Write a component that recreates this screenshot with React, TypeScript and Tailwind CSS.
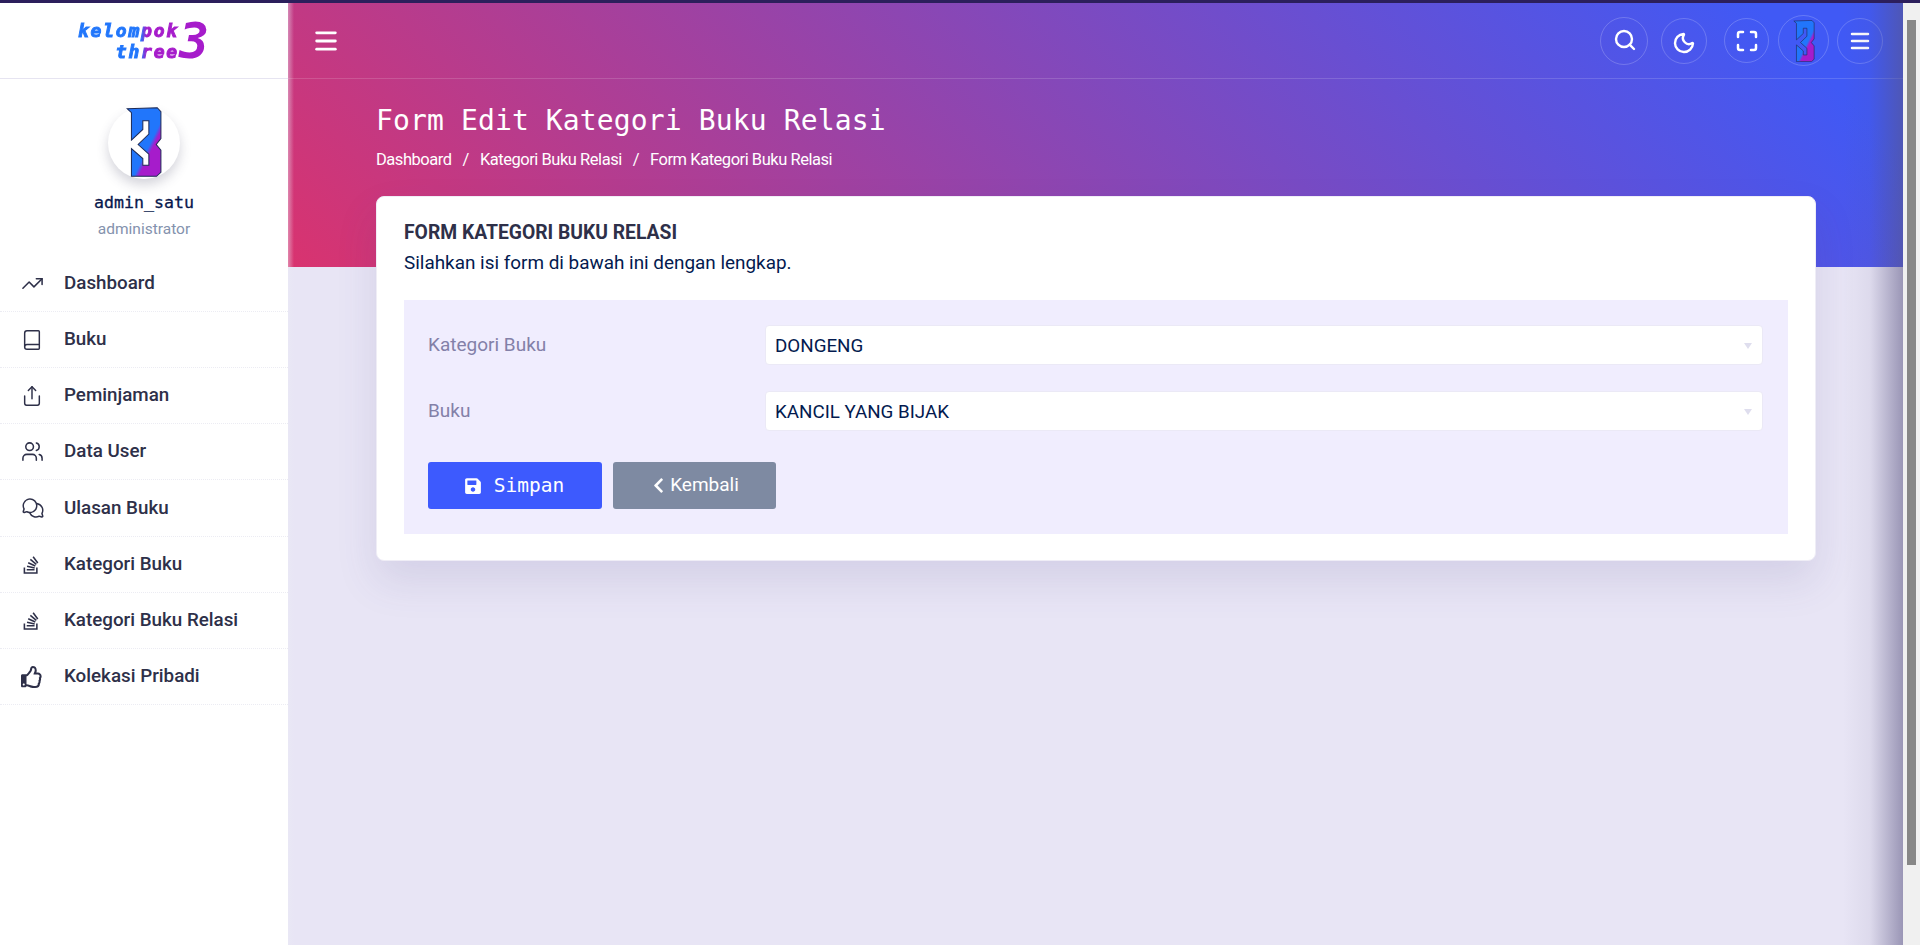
import { Book, Maximize, Menu, Moon, Search, Share, TrendingUp, Users } from "lucide-react";
import { FaChevronLeft, FaRegThumbsUp, FaSave, FaStackOverflow } from "react-icons/fa";
import { PiChatsCircle } from "react-icons/pi";
import type { ReactNode } from "react";

const roboto = "font-['Roboto',sans-serif]";
const mono = "font-['DejaVu_Sans_Mono',monospace]";

function Mark({ className, id }: { className: string; id: string }) {
  return (
    <svg viewBox="98 31 105 209" className={className}>
      <defs>
        <linearGradient id={id} x1="0" y1="0" x2="1" y2="1">
          <stop offset="0.6" stopColor="#2176fb" />
          <stop offset="0.67" stopColor="#a61ccb" />
        </linearGradient>
      </defs>
      <polygon
        points="100,36 190,33 201,45 201,125 187,143 201,160 201,226 188,238 113,238 113,155 147,185 147,205 165,205 165,172 133,143 165,112 165,72 147,72 147,98 113,130 113,48"
        fill={`url(#${id})`}
        stroke="#1d2a55"
        strokeWidth="3"
      />
    </svg>
  );
}

const nav: { label: string; icon: ReactNode; h: string }[] = [
  { label: "Dashboard", icon: <TrendingUp size={23} strokeWidth={1.6} />, h: "h-[56px]" },
  { label: "Buku", icon: <Book size={22} strokeWidth={1.6} />, h: "h-[56px]" },
  { label: "Peminjaman", icon: <Share size={22} strokeWidth={1.6} />, h: "h-[56px]" },
  { label: "Data User", icon: <Users size={23} strokeWidth={1.6} />, h: "h-[56px]" },
  { label: "Ulasan Buku", icon: <PiChatsCircle size={24} />, h: "h-[57px]" },
  { label: "Kategori Buku", icon: <FaStackOverflow size={20} />, h: "h-[56px]" },
  { label: "Kategori Buku Relasi", icon: <FaStackOverflow size={20} />, h: "h-[56px]" },
  { label: "Kolekasi Pribadi", icon: <FaRegThumbsUp size={22} />, h: "h-[56px]" },
];

function Circle({ size, children }: { size: string; children: ReactNode }) {
  return (
    <div className={`${size} flex shrink-0 items-center justify-center rounded-full border border-white/20 text-white`}>
      {children}
    </div>
  );
}

function Field({ label, value }: { label: string; value: string }) {
  return (
    <div className="flex h-10 items-center">
      <div className="w-[361px] pl-[24px] pt-[1px] text-[19px] text-[#8380a8]">{label}</div>
      <div className="flex h-10 flex-1 items-center justify-between rounded-[4px] border border-[#ebe9f6] bg-white pl-[9px] pr-[10px] pt-[2px] text-[18.8px] text-[#031a4f]">
        <span>{value}</span>
        <span className="h-0 w-0 border-x-[4px] border-t-[6px] border-x-transparent border-t-[#dfdeee]" />
      </div>
    </div>
  );
}

export default function App() {
  return (
    <div className={`${roboto} flex h-[945px] flex-col overflow-hidden bg-[#f0f0f0]`}>
      <div className="h-[3px] shrink-0 bg-[#2c1f5c]" />
      <div className="flex min-h-0 flex-1">
        <aside className="flex w-[288px] shrink-0 flex-col bg-white">
          <div className="flex h-[76px] shrink-0 items-center justify-center border-b border-[#e6e4f1] pr-[1px]">
            <div className="flex items-center font-bold italic [font-family:'DejaVu_Sans_Mono',monospace]">
              <div className="flex flex-col items-end bg-[linear-gradient(90deg,#2176fb_0%,#2176fb_62%,#a61ccb_68%,#a61ccb_100%)] bg-clip-text text-transparent [-webkit-text-stroke:1px_transparent]">
                <span className="text-[18px] leading-[21px] tracking-[1.8px]">kelompok</span>
                <span className="text-[18px] leading-[21px] tracking-[1.8px]">three</span>
              </div>
              <span className="text-[50px] leading-[38px] text-[#a61ccb]">3</span>
            </div>
          </div>
          <div className="flex flex-col items-center pt-[28px]">
            <div className="relative flex h-[72px] w-[72px] items-center justify-center rounded-full bg-white shadow-[0_6px_12px_rgba(60,60,90,0.22)]">
              <Mark id="mark-a" className="h-[70px] w-[36px] -translate-y-[1px]" />
            </div>
            <div className={`${mono} mt-[12px] text-[16.6px] leading-[24px] text-[#08184d] [-webkit-text-stroke:0.3px_#08184d]`}>admin_satu</div>
            <div className="mt-[4px] text-[15.5px] leading-[20px] text-[#8492ad]">administrator</div>
          </div>
          <nav className="mt-[17px] flex flex-col">
            {nav.map((n) => (
              <div
                key={n.label}
                className={`${n.h} flex items-center border-b border-dotted border-[#ececf3] pl-[21px] text-[#2e3049]`}
              >
                <span className="flex w-[43px] shrink-0 items-center">{n.icon}</span>
                <span className="text-[18.8px] font-medium">{n.label}</span>
              </div>
            ))}
          </nav>
        </aside>

        <main className="relative flex min-w-0 flex-1 flex-col bg-[#e8e5f5]">
          <div className="h-[264px] shrink-0 bg-[linear-gradient(45deg,#d9336f_0%,#4059f5_92%,#4059f5_100%)]">
            <div className="flex h-[76px] items-center justify-between border-b border-white/15 pl-[24px] pr-[20px]">
              <Menu size={28} strokeWidth={2.4} className="text-white" />
              <div className="flex items-center">
                <Circle size="h-12 w-12"><Search size={24} strokeWidth={2.4} className="-translate-y-[1px] translate-x-[1px]" /></Circle>
                <div className="ml-[13px]"><Circle size="h-[46px] w-[46px]"><Moon size={24} strokeWidth={2.4} className="translate-y-[2px]" /></Circle></div>
                <div className="ml-[17px]"><Circle size="h-[45px] w-[45px]"><Maximize size={24} strokeWidth={2.5} /></Circle></div>
                <div className="ml-[9px]"><Circle size="h-[51px] w-[51px]"><Mark id="mark-b" className="h-[42px] w-[22px]" /></Circle></div>
                <div className="ml-[8px]"><Circle size="h-[46px] w-[46px]"><Menu size={24} strokeWidth={2.5} /></Circle></div>
              </div>
            </div>
            <div className="pl-[88px] pt-[24px] text-white">
              <h1 className={`${mono} text-[28px] leading-[36px] tracking-[0.13px]`}>Form Edit Kategori Buku Relasi</h1>
              <div className="mt-[9px] flex text-[16.5px] leading-[24px] tracking-[-0.47px]">
                <span>Dashboard</span>
                <span className="px-[11px]">/</span>
                <span>Kategori Buku Relasi</span>
                <span className="px-[11px]">/</span>
                <span>Form Kategori Buku Relasi</span>
              </div>
            </div>
          </div>

          <div className="relative ml-[88px] mr-[87px] mt-[-71px] h-[365px] rounded-[8px] border border-[#efedf6] bg-white px-[27px] pt-[23px] shadow-[0_20px_40px_rgba(80,70,140,0.13)]">
            <div className="text-[19.3px] font-bold leading-[26px] text-[#2e3049]">FORM KATEGORI BUKU RELASI</div>
            <div className="mt-[4px] text-[18.9px] leading-[26px] text-[#031a4f]">Silahkan isi form di bawah ini dengan lengkap.</div>
            <div className="mt-[24px] h-[234px] bg-[#f0edfe] pr-[25px] pt-[25px]">
              <Field label="Kategori Buku" value="DONGENG" />
              <div className="mt-[26px]"><Field label="Buku" value="KANCIL YANG BIJAK" /></div>
              <div className="mt-[31px] flex gap-[11px] pl-6">
                <div className="flex h-[47px] w-[174px] items-center justify-center gap-[12px] rounded-[3px] bg-[#3d5afe] pr-[2px] text-white">
                  <FaSave size={18} />
                  <span className={`${mono} text-[19.5px]`}>Simpan</span>
                </div>
                <div className="flex h-[47px] w-[163px] items-center justify-center gap-[3px] rounded-[3px] bg-[#7e8aa2] text-white">
                  <FaChevronLeft size={17} />
                  <span className="text-[19px]">Kembali</span>
                </div>
              </div>
            </div>
          </div>

          <div className="pointer-events-none absolute inset-y-0 left-0 w-[6px] bg-[linear-gradient(90deg,rgba(235,235,245,0.45),rgba(235,235,245,0))]" />
          <div className="pointer-events-none absolute inset-y-0 right-0 w-[60px] bg-[linear-gradient(90deg,rgba(90,85,130,0),rgba(90,85,130,0.08)_45%,rgba(90,85,130,0.55)_100%)]" />
        </main>

        <div className="relative w-[17px] shrink-0 bg-[#f0f0f0]">
          <div className="ml-[4px] mt-[17px] h-[845px] w-[9px] bg-[#878787]" />
        </div>
      </div>
    </div>
  );
}
